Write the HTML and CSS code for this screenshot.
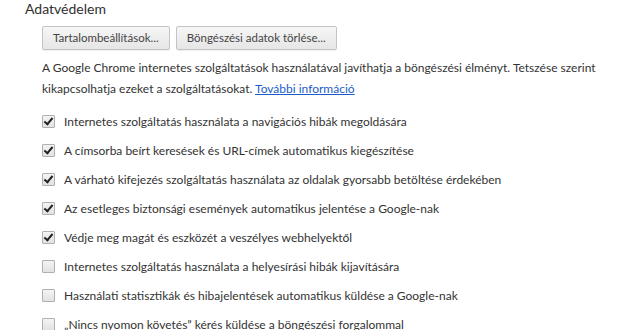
FILE: index.html
```html
<!DOCTYPE html>
<html lang="hu">
<head>
    <meta charset="UTF-8">
    <title>Adatvédelem</title>
    <link rel="stylesheet" href="styles.css">
</head>
<body>
    <div class="section">
        <h3 class="title">Adatvédelem</h3>
        <div class="content">
            <div class="btns">
                <a href="javascript:;" class="btn">Tartalombeállítások...</a>
                <a href="javascript:;" class="btn">Böngészési adatok törlése...</a>
            </div>
            <p class="desc">A Google Chrome internetes szolgáltatások használatával javíthatja a böngészési élményt. Tetszése szerint kikapcsolhatja ezeket a szolgáltatásokat. <a href="##">További információ</a></p>
            <ul class="opts">
                <li><span class="cb on"></span>Internetes szolgáltatás használata a navigációs hibák megoldására</li>
                <li><span class="cb on"></span>A címsorba beírt keresések és URL-címek automatikus kiegészítése</li>
                <li><span class="cb on"></span>A várható kifejezés szolgáltatás használata az oldalak gyorsabb betöltése érdekében</li>
                <li><span class="cb on"></span>Az esetleges biztonsági események automatikus jelentése a Google-nak</li>
                <li><span class="cb on"></span>Védje meg magát és eszközét a veszélyes webhelyektől</li>
                <li><span class="cb"></span>Internetes szolgáltatás használata a helyesírási hibák kijavítására</li>
                <li><span class="cb"></span>Használati statisztikák és hibajelentések automatikus küldése a Google-nak</li>
                <li><span class="cb"></span>„Nincs nyomon követés” kérés küldése a böngészési forgalommal</li>
            </ul>
        </div>
    </div>
</body>
</html>
```
FILE: styles.css
```css
* {
    padding: 0px;
    margin: 0px;
}

a {
    text-decoration: none;
}

ul,
li {
    list-style: none;
}

body {
    background: #fff;
    font-family: "Lato", "Open Sans", sans-serif;
    font-size: 12px;
    color: #333;
}

.section {
    padding: 1px 0 0 25px;
}

.title {
    font-size: 14px;
    font-weight: normal;
    color: #303030;
    line-height: 16px;
}

.content {
    padding-left: 17px;
}

.btns {
    display: flex;
    gap: 6px;
    margin-top: 9px;
}

.btn {
    display: block;
    height: 22px;
    line-height: 22px;
    padding: 0 10px;
    border: 1px solid #c4c4c4;
    border-radius: 2px;
    background: linear-gradient(#f6f6f6, #e6e6e6);
    box-shadow: 0 1px 0 rgba(0, 0, 0, 0.06);
    color: #444;
    font-size: 11.5px;
}

.desc {
    margin-top: 7px;
    line-height: 21px;
    width: 560px;
}

.desc a {
    color: #1a5dc8;
    text-decoration: underline;
}

.opts {
    margin-top: 8px;
}

.opts li {
    display: flex;
    align-items: center;
    height: 29px;
}

.cb {
    width: 11px;
    height: 11px;
    border: 1px solid #b0b0b0;
    border-radius: 1px;
    background: linear-gradient(#f4f4f4, #e2e2e2);
    margin-right: 9px;
    position: relative;
}

.cb.on::after {
    content: "";
    position: absolute;
    left: 3px;
    top: 0px;
    width: 3px;
    height: 7px;
    border: solid #222;
    border-width: 0 2px 2px 0;
    transform: rotate(40deg);
}
```
